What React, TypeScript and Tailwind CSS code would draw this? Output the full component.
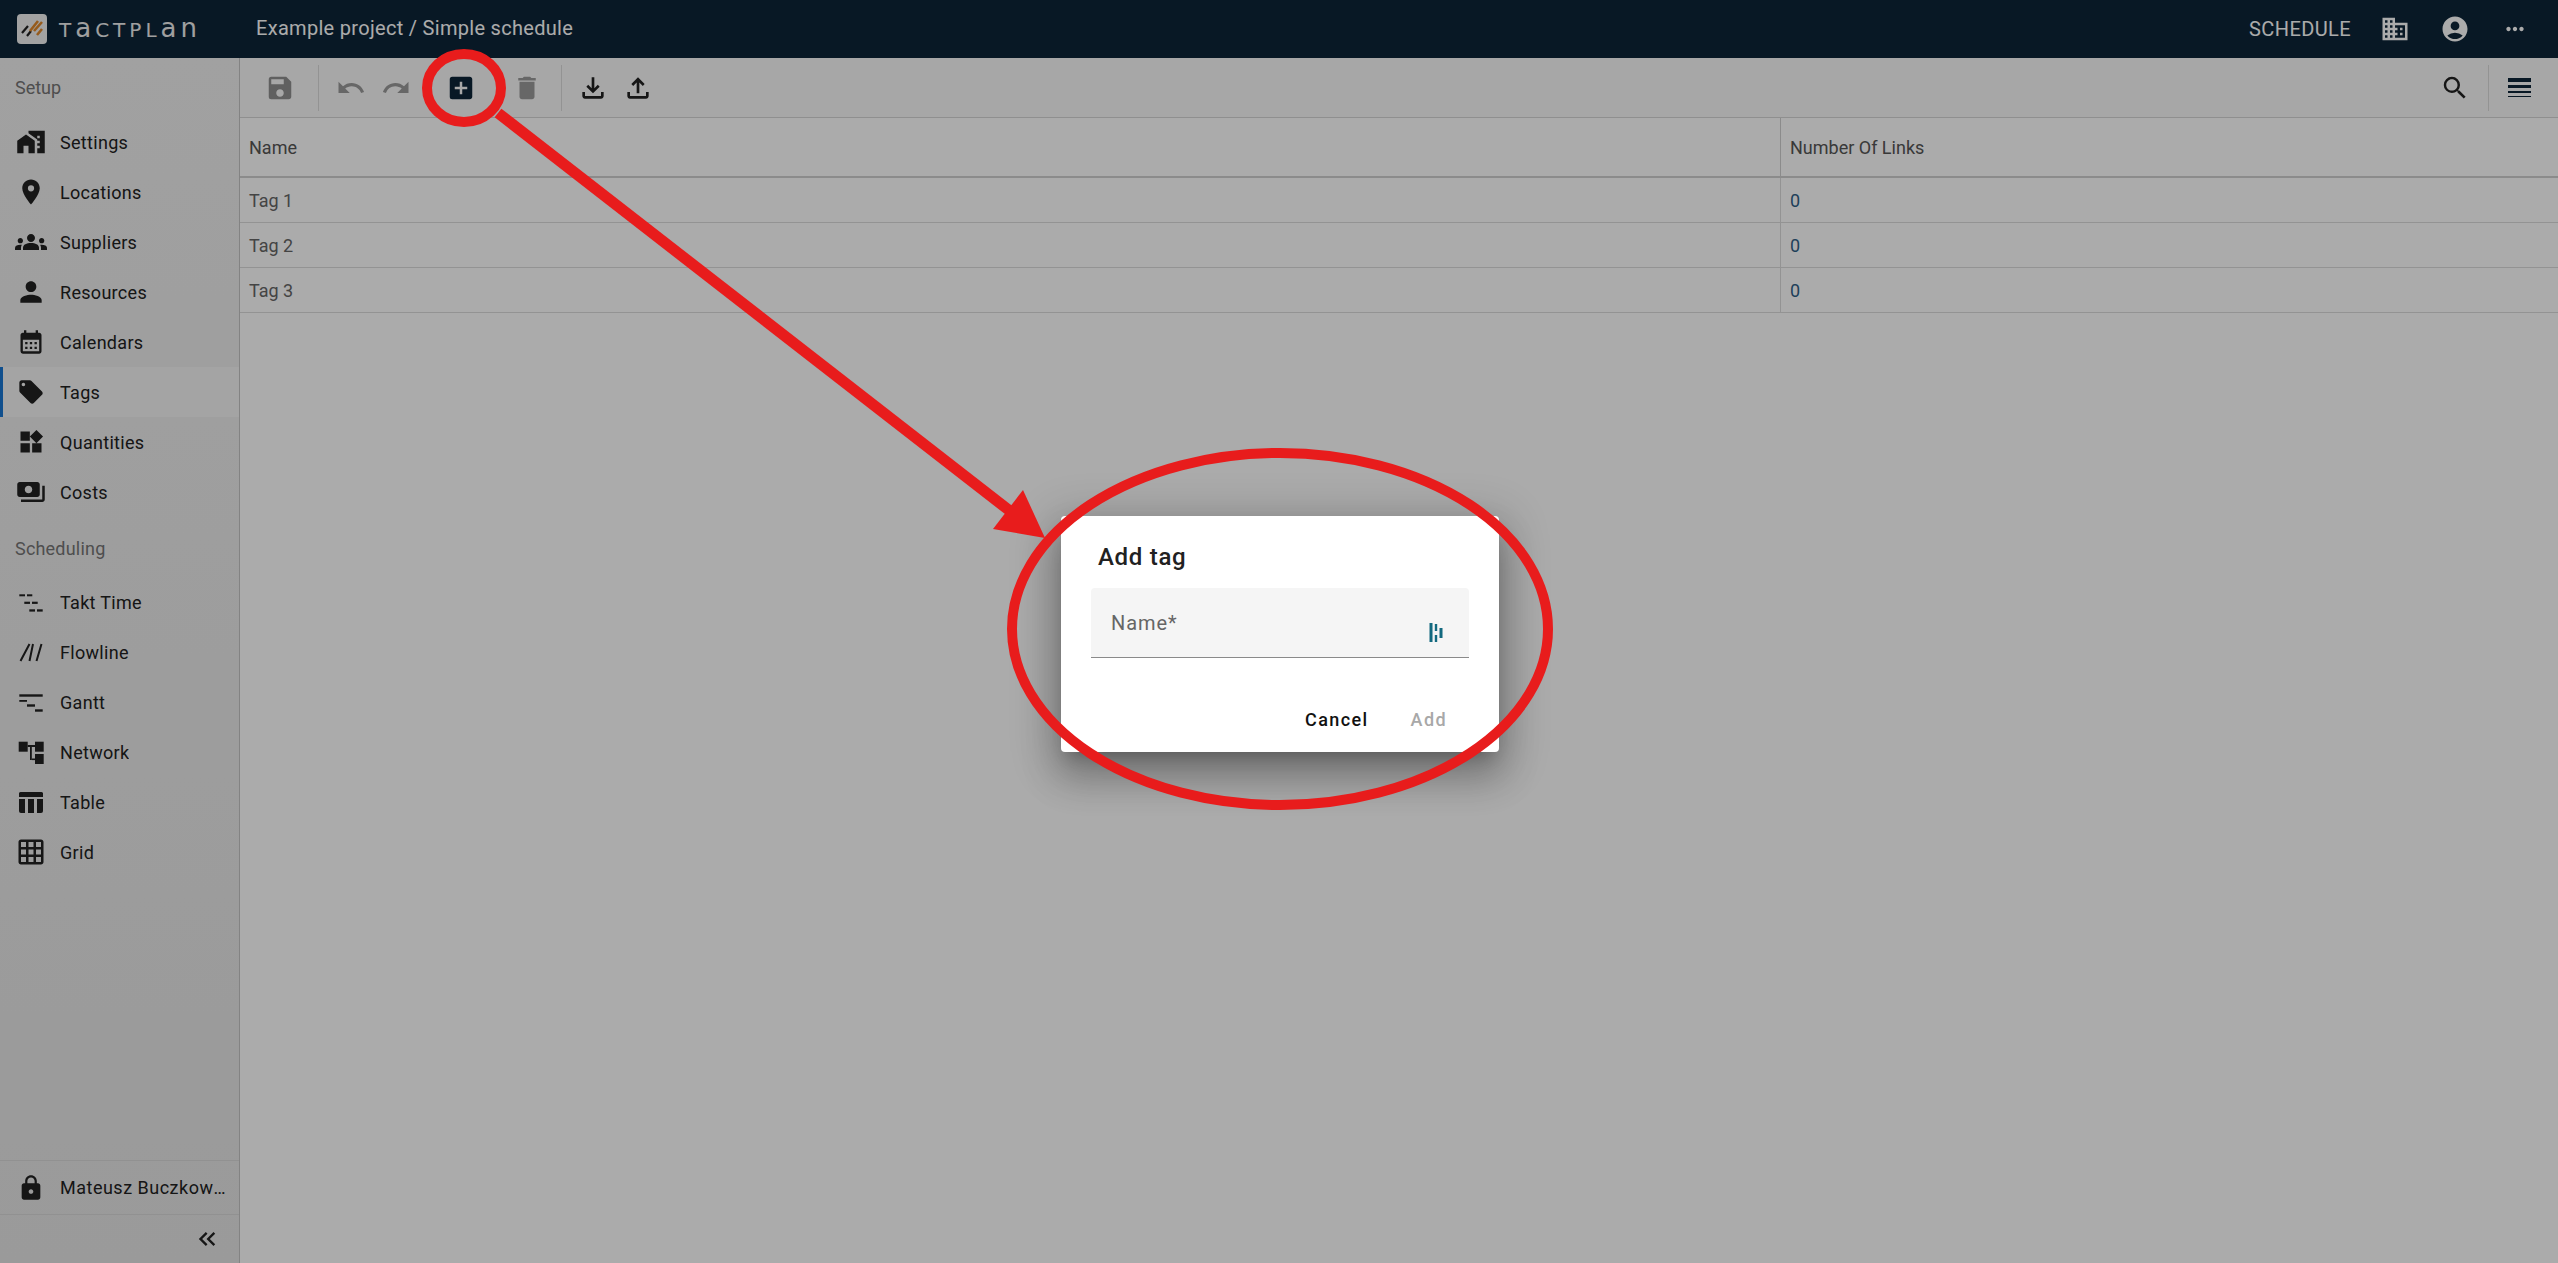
import type { ReactNode } from "react";
import {
  MdAccountCircle,
  MdAddBox,
  MdCalendarMonth,
  MdDelete,
  MdDomain,
  MdGridOn,
  MdGroups,
  MdHomeWork,
  MdKeyboardDoubleArrowLeft,
  MdLocalOffer,
  MdLock,
  MdMoreHoriz,
  MdOutlineFileDownload,
  MdOutlineFileUpload,
  MdPayments,
  MdPerson,
  MdPlace,
  MdRedo,
  MdSave,
  MdSearch,
  MdUndo,
  MdWidgets,
} from "react-icons/md";

const TaktIcon = () => (
  <svg width="26" height="26" viewBox="0 0 26 26" fill="currentColor">
    <rect x="1.3" y="5.3" width="5.7" height="2" />
    <rect x="9" y="5.3" width="5.3" height="2" />
    <rect x="6.3" y="12.7" width="5.7" height="2.2" />
    <rect x="14" y="12.7" width="5.7" height="2.2" />
    <rect x="11.3" y="20.3" width="5.7" height="2.3" />
    <rect x="19" y="20.3" width="5.7" height="2.3" />
  </svg>
);

const FlowlineIcon = () => (
  <svg width="26" height="26" viewBox="0 0 26 26" fill="none" stroke="currentColor" strokeWidth="2">
    <path d="M2.5 22 11.5 5M11.5 22 15 5M18.5 22 23.5 5" />
  </svg>
);

const GanttIcon = () => (
  <svg width="26" height="26" viewBox="0 0 26 26" fill="currentColor">
    <rect x="1.3" y="5.3" width="23.4" height="2.4" />
    <rect x="1.3" y="11" width="7.7" height="1.8" />
    <rect x="9" y="15.3" width="8" height="2.4" />
    <rect x="17" y="20.3" width="7.7" height="2.4" />
  </svg>
);

const NetworkIcon = () => (
  <svg width="26" height="26" viewBox="0 0 26 26" fill="currentColor">
    <rect x="0.7" y="2.7" width="9" height="10" />
    <rect x="17" y="2.7" width="8.7" height="10" />
    <rect x="17" y="15" width="8.7" height="10" />
    <rect x="9.7" y="6" width="7.3" height="2" />
    <rect x="12" y="8" width="1.8" height="13" />
    <rect x="13.8" y="19.5" width="3.2" height="1.6" />
  </svg>
);

const TableIcon = () => (
  <svg width="26" height="26" viewBox="0 0 26 26" fill="currentColor">
    <path d="M3 3h20a2 2 0 0 1 2 1v4H1V4a2 2 0 0 1 2-1z" />
    <path d="M1 10h6v14H3a2 2 0 0 1-2-2z" />
    <rect x="10" y="10" width="6" height="14" />
    <path d="M19 10h6v12a2 2 0 0 1-2 2h-4z" />
  </svg>
);

const DensityIcon = () => (
  <svg width="24" height="24" viewBox="0 0 24 24" fill="currentColor">
    <rect x="0" y="2" width="23" height="4" />
    <rect x="0" y="9" width="23" height="3" />
    <rect x="0" y="15" width="23" height="2" />
    <rect x="0" y="20" width="23" height="1" />
  </svg>
);

const LogoMark = () => (
  <div className="flex h-[30px] w-[30px] shrink-0 items-center justify-center rounded-[4px] bg-[#f2f2f2]">
    <svg width="30" height="30" viewBox="0 0 30 30" fill="none">
      <path d="M5 19 11 12M10 22 14 17" stroke="#222" strokeWidth="2.2" />
      <path d="M13 17 21 7M17 17 25 8M20 21 25 15" stroke="#e0882a" strokeWidth="2.6" />
    </svg>
  </div>
);

const PasswordManagerIcon = () => (
  <svg width="14" height="20" viewBox="0 0 14 20" fill="#13697f">
    <rect x="0.5" y="0" width="3" height="19" />
    <rect x="5.8" y="1" width="2.4" height="7" />
    <rect x="5.8" y="12" width="2.4" height="7" />
    <rect x="10.5" y="5" width="3" height="10" />
  </svg>
);

type NavItem = { label: string; icon: ReactNode; active?: boolean };

const setupItems: NavItem[] = [
  { label: "Settings", icon: <MdHomeWork size={30} /> },
  { label: "Locations", icon: <MdPlace size={30} /> },
  { label: "Suppliers", icon: <MdGroups size={32} /> },
  { label: "Resources", icon: <MdPerson size={32} /> },
  { label: "Calendars", icon: <MdCalendarMonth size={28} /> },
  { label: "Tags", icon: <MdLocalOffer size={28} />, active: true },
  { label: "Quantities", icon: <MdWidgets size={28} /> },
  { label: "Costs", icon: <MdPayments size={30} /> },
];

const schedulingItems: NavItem[] = [
  { label: "Takt Time", icon: <TaktIcon /> },
  { label: "Flowline", icon: <FlowlineIcon /> },
  { label: "Gantt", icon: <GanttIcon /> },
  { label: "Network", icon: <NetworkIcon /> },
  { label: "Table", icon: <TableIcon /> },
  { label: "Grid", icon: <MdGridOn size={30} /> },
];

function NavRow({ item }: { item: NavItem }) {
  return (
    <div
      className={`flex h-[50px] items-center border-l-[3px] ${
        item.active ? "border-[#1976d2] bg-[#f5f5f5]" : "border-transparent"
      }`}
    >
      <span className="flex w-[57px] shrink-0 justify-center pr-[2px] text-[#212121]">{item.icon}</span>
      <span className="truncate text-[18px] tracking-[0.3px] text-[#212121]">{item.label}</span>
    </div>
  );
}

function Divider() {
  return <div className="mx-[9px] h-[46px] w-px bg-[#dcdcdc]" />;
}

const rows = ["Tag 1", "Tag 2", "Tag 3"];

export default function App() {
  return (
    <div className="relative flex h-[1263px] w-[2558px] flex-col overflow-hidden bg-white font-['Roboto',sans-serif]">
      <header className="flex h-[58px] shrink-0 items-center bg-[#0c2438] pl-[17px] pr-[30px] text-white">
        <LogoMark />
        <span className="ml-[12px] flex w-[197px] items-baseline pb-[3px] font-['DejaVu_Sans',sans-serif] text-[20px] leading-none tracking-[4px] text-[#eeeeee]">
          <span>T</span>
          <span className="text-[26px]">a</span>
          <span>CTPL</span>
          <span className="text-[26px]">an</span>
        </span>
        <span className="pb-[2px] text-[20px] tracking-[0.3px]">Example project / Simple schedule</span>
        <span className="ml-auto pb-[1px] text-[20px] tracking-[0.4px]">SCHEDULE</span>
        <MdDomain size={30} className="ml-[29px]" />
        <MdAccountCircle size={30} className="ml-[30px]" />
        <MdMoreHoriz size={26} className="ml-[32px]" />
      </header>

      <div className="flex min-h-0 flex-1">
        <aside className="flex w-[240px] shrink-0 flex-col border-r border-[#c4c4c4] bg-gradient-to-b from-[#f0f0f0] to-[#e6e6e6]">
          <div className="flex h-[59px] items-center pl-[15px] text-[18px] text-[#757575]">Setup</div>
          {setupItems.map((item) => (
            <NavRow key={item.label} item={item} />
          ))}
          <div className="flex h-[60px] items-center pl-[15px] pt-[2px] text-[18px] tracking-[0.2px] text-[#757575]">
            Scheduling
          </div>
          {schedulingItems.map((item) => (
            <NavRow key={item.label} item={item} />
          ))}
          <div className="mt-auto flex h-[55px] items-center border-y border-[#d9d9d9] pl-[3px] pr-[6px]">
            <span className="flex w-[57px] shrink-0 justify-center pr-[2px] text-[#212121]">
              <MdLock size={28} />
            </span>
            <span className="min-w-0 truncate text-[18px] tracking-[0.5px] text-[#212121]">Mateusz Buczkowski</span>
          </div>
          <div className="flex h-[48px] items-center justify-end pr-[18px] text-[#212121]">
            <MdKeyboardDoubleArrowLeft size={28} />
          </div>
        </aside>

        <main className="flex min-w-0 flex-1 flex-col">
          <div className="flex h-[60px] shrink-0 items-center border-b border-[#d6d6d6] bg-[#fafafa] pl-[25px] pr-[26px]">
            <MdSave size={30} className="text-[#8f8f8f]" />
            <span className="ml-[14px]">
              <Divider />
            </span>
            <MdUndo size={30} className="ml-[8px] text-[#9a9a9a]" />
            <MdRedo size={30} className="ml-[15px] text-[#9a9a9a]" />
            <MdAddBox size={30} className="ml-[35px] text-[#0c2438]" />
            <MdDelete size={30} className="ml-[36px] text-[#9a9a9a]" />
            <span className="ml-[10px]">
              <Divider />
            </span>
            <MdOutlineFileDownload size={32} className="ml-[6px] text-[#212121]" />
            <MdOutlineFileUpload size={32} className="ml-[13px] text-[#212121]" />
            <MdSearch size={30} className="ml-auto text-[#212121]" />
            <span className="ml-[9px]">
              <Divider />
            </span>
            <span className="ml-[10px] text-[#0c2438]">
              <DensityIcon />
            </span>
          </div>

          <div className="grid grid-cols-[1541px_1fr] text-[18px]">
            <div className="flex h-[60px] items-center border-b-2 border-r border-[#d0d0d0] pl-[9px] pt-[1px] text-[#555]">Name</div>
            <div className="flex h-[60px] items-center border-b-2 border-[#d0d0d0] pl-[9px] pt-[1px] text-[#555]">Number Of Links</div>
            {rows.map((row) => (
              <div key={row} className="contents">
                <div className="flex h-[45px] items-center border-b border-r border-[#dcdcdc] pl-[9px] pt-[1px] text-[#666]">{row}</div>
                <div className="flex h-[45px] items-center border-b border-[#dcdcdc] pl-[9px] pt-[1px] text-[#2f5f86]">0</div>
              </div>
            ))}
          </div>
        </main>
      </div>

      {/* scrim + dialog */}
      <div className="absolute inset-0 flex items-center justify-center bg-black/[0.33] pl-[2px] pt-[5px]">
        <div className="h-[236px] w-[438px] rounded-[4px] bg-white pt-[26px] shadow-[0_11px_15px_-7px_rgba(0,0,0,0.2),0_24px_38px_3px_rgba(0,0,0,0.2),0_9px_46px_8px_rgba(0,0,0,0.2)]">
          <div className="pl-[37px] text-[24px] font-medium leading-[30px] tracking-[0.7px] text-[#212121]">Add tag</div>
          <div className="mx-[30px] mt-[16px] flex h-[70px] justify-between rounded-t-[4px] border-b border-[#8a8a8a] bg-[#f5f5f5] pl-[20px] pr-[26px]">
            <span className="mt-[25px] text-[20px] leading-[20px] tracking-[0.9px] text-[#666]">Name*</span>
            <span className="mt-[35px]">
              <PasswordManagerIcon />
            </span>
          </div>
          <div className="mt-[50px] flex items-center justify-end pr-[52px] text-[18px] font-medium leading-[24px] tracking-[1.4px]">
            <span className="text-[#111]">Cancel</span>
            <span className="ml-[42px] text-[#a8a8a8]">Add</span>
          </div>
        </div>
      </div>

      {/* red annotation drawn on top of the screenshot */}
      <svg className="pointer-events-none absolute inset-0" width="2558" height="1263" viewBox="0 0 2558 1263" fill="none">
        <ellipse cx="464" cy="88" rx="37" ry="34" stroke="#e81c1c" strokeWidth="10" />
        <path d="M498 113 1010 511" stroke="#e81c1c" strokeWidth="11" />
        <path d="M1023 490 1045 538 993 529Z" fill="#e81c1c" />
        <ellipse cx="1280" cy="629" rx="268" ry="176" stroke="#e81c1c" strokeWidth="10" />
      </svg>
    </div>
  );
}
